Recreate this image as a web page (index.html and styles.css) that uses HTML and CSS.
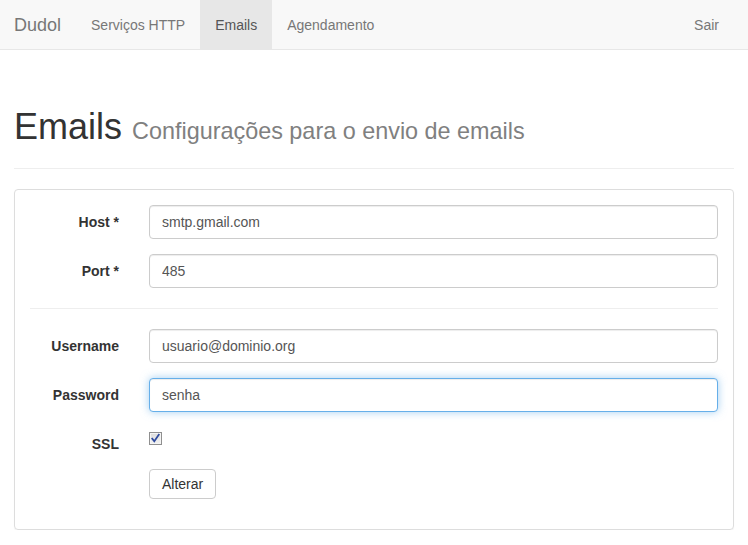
FILE: index.html
```html
<!DOCTYPE html>
<html lang="pt">
<head>
<meta charset="utf-8">
<title>Dudol - Emails</title>
<link rel="stylesheet" href="styles.css">
</head>
<body>
<nav class="navbar">
  <div class="navbar-inner">
    <a class="brand" href="#">Dudol</a>
    <ul class="nav">
      <li><a href="#">Serviços HTTP</a></li>
      <li class="active"><a href="#">Emails</a></li>
      <li><a href="#">Agendamento</a></li>
    </ul>
    <ul class="nav nav-right">
      <li><a href="#">Sair</a></li>
    </ul>
  </div>
</nav>
<main class="container">
  <div class="page-header">
    <h1>Emails <small>Configurações para o envio de emails</small></h1>
  </div>
  <div class="panel">
    <form class="form">
      <div class="form-group">
        <label class="control-label">Host *</label>
        <div class="control"><input class="form-control" type="text" value="smtp.gmail.com"></div>
      </div>
      <div class="form-group">
        <label class="control-label">Port *</label>
        <div class="control"><input class="form-control" type="text" value="485"></div>
      </div>
      <hr class="sep">
      <div class="form-group">
        <label class="control-label">Username</label>
        <div class="control"><input class="form-control" type="text" value="usuario@dominio.org"></div>
      </div>
      <div class="form-group">
        <label class="control-label">Password</label>
        <div class="control"><input class="form-control focused" type="text" value="senha"></div>
      </div>
      <div class="form-group check-group">
        <label class="control-label">SSL</label>
        <div class="control checkbox">
          <span class="check-box"><svg width="11" height="11" viewBox="0 0 11 11"><path d="M2.2 5.6 L4.3 8.3 L8.8 1.8" fill="none" stroke="#2e4a9e" stroke-width="1.7" stroke-linecap="square"/></svg></span>
        </div>
      </div>
      <div class="form-group">
        <div class="control offset"><button type="button" class="btn">Alterar</button></div>
      </div>
    </form>
  </div>
</main>
</body>
</html>
```
FILE: styles.css
```css
* { box-sizing: border-box; }
html, body { margin: 0; padding: 0; }
body {
  font-family: "Liberation Sans", Arial, Helvetica, sans-serif;
  font-size: 14px;
  line-height: 20px;
  color: #333;
  background: #fff;
}
a { text-decoration: none; }

.navbar {
  height: 50px;
  background: #f8f8f8;
  border-bottom: 1px solid #e7e7e7;
}
.navbar-inner {
  display: flex;
  height: 49px;
  padding: 0 14px;
}
.brand {
  font-size: 18px;
  line-height: 20px;
  padding: 15px 15px 15px 0;
  color: #777;
}
.nav {
  display: flex;
  list-style: none;
  margin: 0;
  padding: 0;
}
.nav a {
  display: block;
  padding: 15px 15px 14px;
  line-height: 20px;
  color: #777;
}
.nav .active a {
  background: #e7e7e7;
  color: #555;
}
.nav-right { margin-left: auto; }

.container { padding: 0 14px; }

.page-header {
  margin: 0 0 20px;
  padding-top: 57px;
  padding-bottom: 9px;
  border-bottom: 1px solid #eee;
}
.page-header h1 {
  margin: 0 0 8px;
  font-size: 36px;
  font-weight: 500;
  line-height: 40px;
  color: #333;
}
.page-header h1 small {
  font-size: 23.4px;
  color: #808080;
  font-weight: 400;
}

.panel {
  border: 1px solid #ddd;
  border-radius: 4px;
  box-shadow: 0 1px 1px rgba(0,0,0,.05);
  padding: 15px;
}
.form-group {
  display: flex;
  margin: 0 -15px 15px;
}
.control-label {
  flex: 0 0 119px;
  padding: 7px 15px 0;
  text-align: right;
  font-weight: bold;
  line-height: 20px;
}
.control {
  flex: 1;
  padding: 0 15px;
}
.control.offset { margin-left: 119px; }
.form-control {
  display: block;
  width: 100%;
  height: 34px;
  padding: 6px 12px;
  font-family: inherit;
  font-size: 14px;
  line-height: 20px;
  color: #555;
  background: #fff;
  border: 1px solid #ccc;
  border-radius: 4px;
  box-shadow: inset 0 1px 1px rgba(0,0,0,.075);
  outline: none;
}
.form-control.focused {
  border-color: #66afe9;
  box-shadow: inset 0 1px 1px rgba(0,0,0,.075), 0 0 8px rgba(102,175,233,.6);
}
.sep {
  border: 0;
  border-top: 1px solid #eee;
  margin: 20px 0;
}
.checkbox { padding-top: 5px; min-height: 27px; }
.check-box {
  display: block;
  width: 13px;
  height: 13px;
  border: 1px solid #8f8f8f;
  background: linear-gradient(#dcdcdc, #f2f2f2);
  box-shadow: inset 0 0 0 1px #f4f4f4;
}
.check-box svg { display: block; }
.btn {
  display: inline-block;
  height: 30px;
  padding: 4px 12px;
  font-family: inherit;
  font-size: 14px;
  line-height: 20px;
  color: #333;
  background: #fff;
  border: 1px solid #ccc;
  border-radius: 4px;
  cursor: pointer;
}
```
